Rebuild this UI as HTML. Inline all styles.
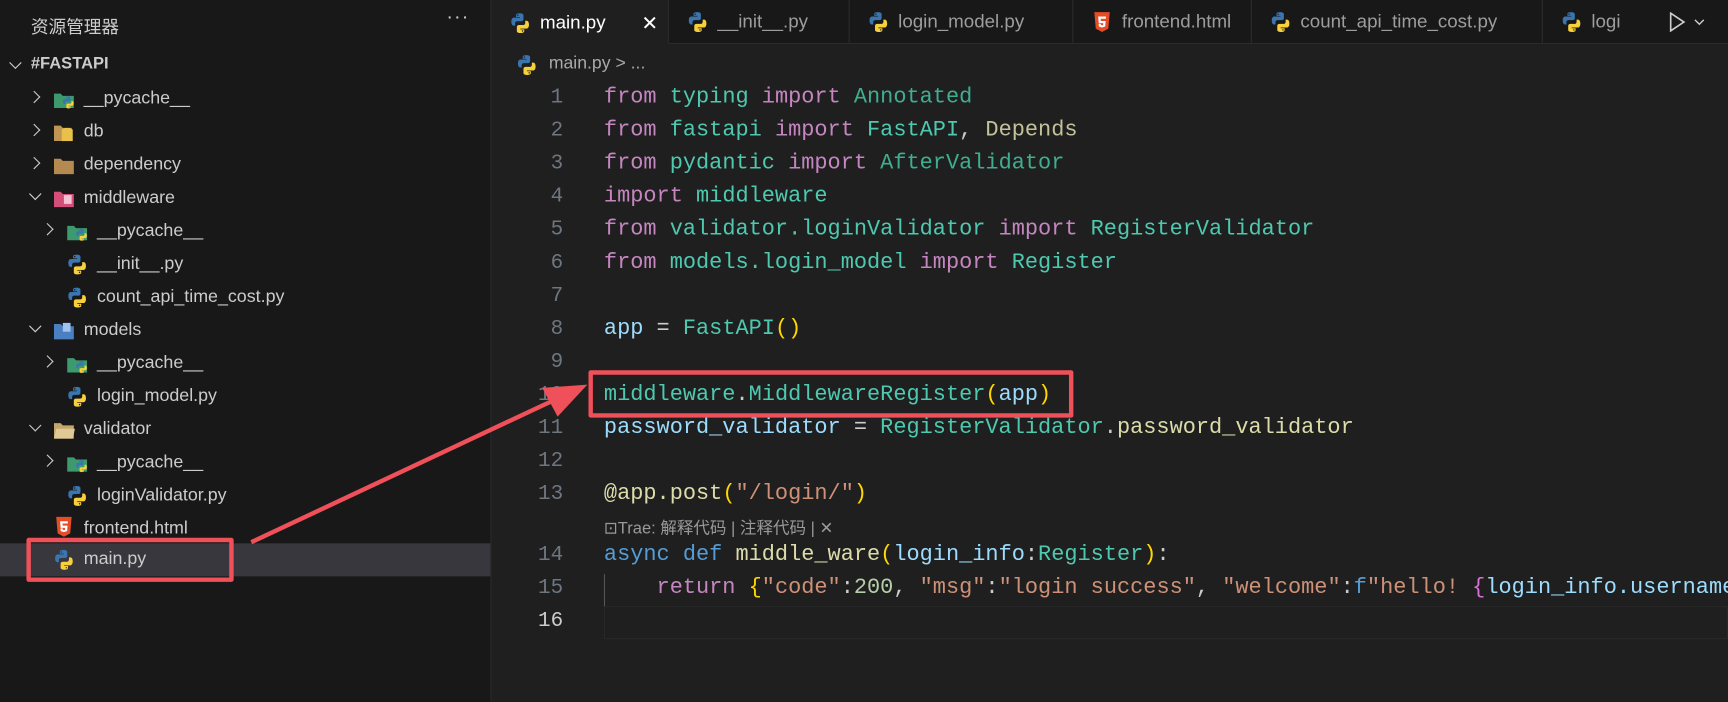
<!DOCTYPE html>
<html><head><meta charset="utf-8"><style>
*{margin:0;padding:0;box-sizing:border-box}
html,body{width:1728px;height:702px;overflow:hidden;background:#1f1f1f}
#w{width:1568px;height:637px;transform:scale(1.10204);transform-origin:0 0;position:relative;font-family:"Liberation Sans","Noto Sans CJK SC",sans-serif;color:#ccc}
.sb{position:absolute;left:0;top:0;width:446px;height:637px;background:#181818;border-right:1px solid #2b2b2b}
.t{position:absolute;font-size:16.2px;white-space:nowrap;color:#ccc}
.chev{position:absolute;width:8px;height:8px;border-right:1.6px solid #ccc;border-bottom:1.6px solid #ccc}
.r{transform:rotate(-45deg)}.d{transform:rotate(45deg)}
.ic{position:absolute;width:20px;height:20px}
.tabs{position:absolute;left:446px;top:0;width:1122px;height:40px;background:#181818;border-bottom:1px solid #2b2b2b}
.tab{position:absolute;top:0;height:40px;border-right:1px solid #2b2b2b;font-size:17px;color:#9d9d9d}
.tab span{position:absolute;left:44px;top:10px;white-space:nowrap}
.tab svg{position:absolute;left:16px;top:10px}
.code{position:absolute;font-family:"Liberation Mono",monospace;font-size:19.9px;white-space:pre;color:#ccc}
.ln{position:absolute;width:40px;text-align:right;left:471px;font-family:"Liberation Mono",monospace;font-size:19px;color:#6e7681}
.k{color:#c586c0}.m{color:#4ec9b0}.c{color:#3fae8f}.v{color:#9cdcfe}.f{color:#dcdcaa}.s{color:#ce9178}.n{color:#b5cea8}.b{color:#569cd6}.y{color:#ffd700}.p{color:#da70d6}.dp{color:#c2c29a}
</style></head><body><div id="w">
<svg width="0" height="0" style="position:absolute"><defs>
<symbol id="py" viewBox="0 0 20 20"><path d="M9.8 1C6 1 6.3 2.6 6.3 2.6V4.4h3.6V5H4.4S2 4.8 2 8.6s2.1 3.6 2.1 3.6h1.3v-1.8s-.1-2.1 2-2.1h3.6s2 0 2-1.9V3s.3-2-3.200-2zM7.8 2.2a.6.6 0 110 1.3.6.6 0 010-1.3z" fill="#3a75b0"/><path d="M10.2 19c3.8 0 3.5-1.6 3.5-1.6v-1.8h-3.6V15h5.5s2.4.2 2.4-3.6-2.1-3.6-2.1-3.6h-1.3v1.8s.1 2.1-2 2.1H9s-2 0-2 1.9V17s-.3 2 3.2 2zm2-1.2a.6.6 0 110-1.3.6.6 0 010 1.3z" fill="#f7d03c"/></symbol>
<symbol id="h5" viewBox="0 0 20 20"><path d="M3 1h14l-1.3 15L10 19l-5.7-3z" fill="#e44d26"/><path d="M6.5 5h7v2H8.7l.2 2H13.3l-.4 5-2.9.9-2.9-.9-.2-2.5h2l.1 1.2 1 .3 1-.3.1-1.7H7z" fill="#fff"/></symbol>
<symbol id="pc" viewBox="0 0 20 20"><path d="M1 5h6l2 2h10v11H1z" fill="#3c9a6e"/><use href="#py" x="8" y="7" width="12" height="12"/></symbol>
</defs></svg>
<div class="sb">
<div class="t" style="left:28px;top:11px;font-size:16px">资源管理器</div>
<div class="t" style="left:405px;top:5px;font-size:18px;letter-spacing:1px">···</div>
<div class="chev d" style="left:10px;top:53px"></div>
<div class="t" style="left:28px;top:49px;font-weight:bold;font-size:15px">#FASTAPI</div>
<div class="chev r" style="left:27px;top:84px"></div><svg class="ic" style="left:48px;top:80px"><use href="#pc"/></svg><div class="t" style="left:76px;top:80px">__pycache__</div>
<div class="chev r" style="left:27px;top:114px"></div><svg class="ic" style="left:48px;top:110px" viewBox="0 0 20 20"><path d="M1 4h6l2 2h8v12H1z" fill="#c09553"/><ellipse cx="13" cy="8" rx="5" ry="2" fill="#e8c14a"/><rect x="8" y="8" width="10" height="10" fill="#e8c14a"/></svg><div class="t" style="left:76px;top:110px">db</div>
<div class="chev r" style="left:27px;top:144px"></div><svg class="ic" style="left:48px;top:140px" viewBox="0 0 20 20"><path d="M1 4h6l2 2h10v12H1z" fill="#b48a50"/></svg><div class="t" style="left:76px;top:140px">dependency</div>
<div class="chev d" style="left:28px;top:172px"></div><svg class="ic" style="left:48px;top:170px" viewBox="0 0 20 20"><path d="M1 4h6l2 2h10v12H1z" fill="#d44e7a"/><rect x="10" y="7" width="7" height="8" fill="#f3c2d3"/></svg><div class="t" style="left:76px;top:170px">middleware</div>
<div class="chev r" style="left:39px;top:204px"></div><svg class="ic" style="left:60px;top:200px"><use href="#pc"/></svg><div class="t" style="left:88px;top:200px">__pycache__</div>
<svg class="ic" style="left:60px;top:230px"><use href="#py"/></svg><div class="t" style="left:88px;top:230px">__init__.py</div>
<svg class="ic" style="left:60px;top:260px"><use href="#py"/></svg><div class="t" style="left:88px;top:260px">count_api_time_cost.py</div>
<div class="chev d" style="left:28px;top:292px"></div><svg class="ic" style="left:48px;top:290px" viewBox="0 0 20 20"><path d="M1 4h6l2 2h10v12H1z" fill="#4a7fc1"/><rect x="9" y="3" width="7" height="8" fill="#9fc2ee"/></svg><div class="t" style="left:76px;top:290px">models</div>
<div class="chev r" style="left:39px;top:324px"></div><svg class="ic" style="left:60px;top:320px"><use href="#pc"/></svg><div class="t" style="left:88px;top:320px">__pycache__</div>
<svg class="ic" style="left:60px;top:350px"><use href="#py"/></svg><div class="t" style="left:88px;top:350px">login_model.py</div>
<div class="chev d" style="left:28px;top:382px"></div><svg class="ic" style="left:48px;top:380px" viewBox="0 0 20 20"><path d="M1 4h6l2 2h10v12H1z" fill="#c4a56a"/><path d="M3 9h17l-2 9H1z" fill="#e0c995"/></svg><div class="t" style="left:76px;top:380px">validator</div>
<div class="chev r" style="left:39px;top:414px"></div><svg class="ic" style="left:60px;top:410px"><use href="#pc"/></svg><div class="t" style="left:88px;top:410px">__pycache__</div>
<svg class="ic" style="left:60px;top:440px"><use href="#py"/></svg><div class="t" style="left:88px;top:440px">loginValidator.py</div>
<svg class="ic" style="left:48px;top:468px"><use href="#h5"/></svg><div class="t" style="left:76px;top:470px">frontend.html</div>
<div style="position:absolute;left:0;top:493px;width:445px;height:30px;background:#37373d"></div>
<svg class="ic" style="left:48px;top:498px"><use href="#py"/></svg><div class="t" style="left:76px;top:498px">main.py</div>
<div style="position:absolute;left:24px;top:488px;width:188px;height:40px;border:4px solid #f0505a;border-radius:2px"></div>
</div>
<div class="tabs">
<div class="tab" style="left:0;width:161px;background:#1f1f1f;color:#fff;border-top:1px solid #1f1f1f"><svg width="20" height="20"><use href="#py"/></svg><span>main.py</span><span style="left:136px;font-size:18px">✕</span></div>
<div class="tab" style="left:161px;width:164px"><svg width="20" height="20"><use href="#py"/></svg><span>__init__.py</span></div>
<div class="tab" style="left:325px;width:203px"><svg width="20" height="20"><use href="#py"/></svg><span>login_model.py</span></div>
<div class="tab" style="left:528px;width:162px"><svg width="20" height="20"><use href="#h5"/></svg><span>frontend.html</span></div>
<div class="tab" style="left:690px;width:264px"><svg width="20" height="20"><use href="#py"/></svg><span>count_api_time_cost.py</span></div>
<div class="tab" style="left:954px;width:168px;border:none"><svg width="20" height="20"><use href="#py"/></svg><span>logi</span></div>
<svg style="position:absolute;left:1068px;top:11px" width="40" height="18" viewBox="0 0 40 18"><path d="M2 1l12 8-12 8z" fill="none" stroke="#ccc" stroke-width="1.5"/><path d="M24 7l4 4 4-4" fill="none" stroke="#ccc" stroke-width="1.3"/></svg>
</div>
<svg class="ic" style="left:468px;top:49px"><use href="#py"/></svg><div class="t" style="left:498px;top:49px;color:#aaa;font-size:16px">main.py &gt; ...</div>
<div class="ln" style="top:77px">1</div><div class="ln" style="top:107px">2</div><div class="ln" style="top:137px">3</div><div class="ln" style="top:167px">4</div><div class="ln" style="top:197px">5</div><div class="ln" style="top:227px">6</div><div class="ln" style="top:257px">7</div><div class="ln" style="top:287px">8</div><div class="ln" style="top:317px">9</div><div class="ln" style="top:347px">10</div><div class="ln" style="top:377px">11</div><div class="ln" style="top:407px">12</div><div class="ln" style="top:437px">13</div><div class="ln" style="top:492px">14</div><div class="ln" style="top:522px">15</div><div class="ln" style="top:552px;color:#ccc">16</div>
<div class="code" style="left:548px;top:76px"><span class="k">from</span> <span class="m">typing</span> <span class="k">import</span> <span class="c">Annotated</span></div>
<div class="code" style="left:548px;top:106px"><span class="k">from</span> <span class="m">fastapi</span> <span class="k">import</span> <span class="m">FastAPI</span>, <span class="dp">Depends</span></div>
<div class="code" style="left:548px;top:136px"><span class="k">from</span> <span class="m">pydantic</span> <span class="k">import</span> <span class="c">AfterValidator</span></div>
<div class="code" style="left:548px;top:166px"><span class="k">import</span> <span class="m">middleware</span></div>
<div class="code" style="left:548px;top:196px"><span class="k">from</span> <span class="m">validator.loginValidator</span> <span class="k">import</span> <span class="m">RegisterValidator</span></div>
<div class="code" style="left:548px;top:226px"><span class="k">from</span> <span class="m">models.login_model</span> <span class="k">import</span> <span class="m">Register</span></div>
<div class="code" style="left:548px;top:286px"><span class="v">app</span> = <span class="m">FastAPI</span><span class="y">()</span></div>
<div class="code" style="left:548px;top:346px"><span class="m">middleware</span>.<span class="m">MiddlewareRegister</span><span class="y">(</span><span class="v">app</span><span class="y">)</span></div>
<div class="code" style="left:548px;top:376px"><span class="v">password_validator</span> = <span class="m">RegisterValidator</span>.<span class="f">password_validator</span></div>
<div class="code" style="left:548px;top:436px"><span class="f">@app.post</span><span class="y">(</span><span class="s">"/login/"</span><span class="y">)</span></div>
<div class="t" style="left:548px;top:468px;font-size:15px;color:#999">⊡Trae: 解释代码 | 注释代码 | ✕</div>
<div class="code" style="left:548px;top:491px"><span class="b">async def</span> <span class="f">middle_ware</span><span class="y">(</span><span class="v">login_info</span>:<span class="m">Register</span><span class="y">)</span>:</div>
<div class="code" style="left:548px;top:521px">    <span class="k">return</span> <span class="y">{</span><span class="s">"code"</span>:<span class="n">200</span>, <span class="s">"msg"</span>:<span class="s">"login success"</span>, <span class="s">"welcome"</span>:<span class="b">f</span><span class="s">"hello! </span><span class="p">{</span><span class="v">login_info.username</span></div>
<div style="position:absolute;left:548px;top:521px;width:1px;height:30px;background:#555"></div>
<div style="position:absolute;left:548px;top:550px;width:1020px;height:30px;border:1px solid #282828"></div>
<div style="position:absolute;left:534px;top:336px;width:440px;height:43px;border:4px solid #f0505a;border-radius:2px"></div>
<svg style="position:absolute;left:0;top:0" width="1568" height="637"><line x1="228" y1="492" x2="505" y2="362" stroke="#f0505a" stroke-width="4"/><path d="M533 349L492 352 506 378z" fill="#f0505a"/></svg>
</div></body></html>
